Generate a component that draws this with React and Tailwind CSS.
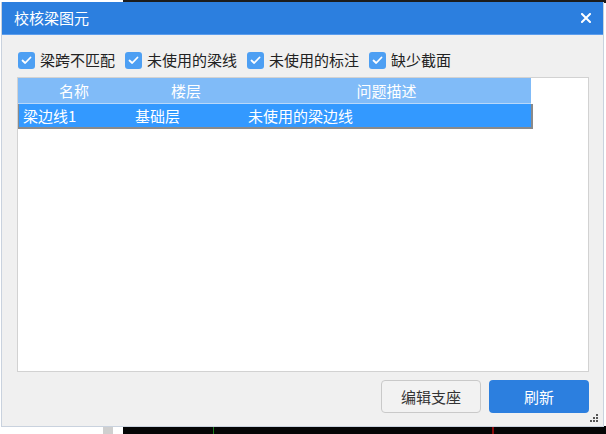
import React from "react";

const font = { fontFamily: '"Noto Sans CJK SC", "Noto Sans", sans-serif' };

function Check({ label }) {
  return (
    <div className="flex items-center gap-[5px]">
      <div className="w-[17px] h-[17px] rounded-[3px] bg-[#4d9ff3] flex items-center justify-center">
        <svg width="11" height="9" viewBox="0 0 11 9" fill="none">
          <path d="M1.5 4.5 L4.2 7 L9.5 1.5" stroke="white" strokeWidth="1.8" strokeLinecap="round" strokeLinejoin="round" />
        </svg>
      </div>
      <span className="text-[15px] leading-[18px] text-[#222]">{label}</span>
    </div>
  );
}

export default function App() {
  return (
    <div className="relative w-[606px] h-[434px] bg-white overflow-hidden" style={font}>
      {/* desktop content behind the window */}
      <div className="absolute left-[123px] top-0 w-[483px] h-[3px] bg-[#1c1c1c]" />
      <div className="absolute left-[123px] bottom-0 w-[483px] h-[8px] bg-[#050505]" />
      <div className="absolute left-[103px] bottom-0 w-[10px] h-[8px] bg-[#cfcfcf]" />
      <div className="absolute left-[213px] bottom-0 w-[1px] h-[8px] bg-[#1a7a1a]" />
      <div className="absolute left-[492px] bottom-0 w-[2px] h-[8px] bg-[#8a0a0a]" />

      <div className="absolute left-[1px] top-[2px] w-[603px] h-[425px] flex flex-col border border-[#c9d2de] border-t-0 bg-[#f0f0f0]">
        {/* title bar */}
        <div className="h-[33px] bg-[#2c7fdf] border-b border-[#5c9ded] flex items-center justify-between pl-[12px] pr-[12px] shrink-0">
          <span className="text-[15px] leading-[18px] text-white">校核梁图元</span>
          <svg width="10" height="10" viewBox="0 0 10 10">
            <path d="M1 1 L9 9 M9 1 L1 9" stroke="white" strokeWidth="2" strokeLinecap="square" />
          </svg>
        </div>

        {/* body */}
        <div className="flex flex-col flex-1 pl-[15px] pr-[14px] pt-[16px] pb-[14px]">
          <div className="flex items-center gap-[10px] pl-[1px] h-[18px]">
            <Check label="梁跨不匹配" />
            <Check label="未使用的梁线" />
            <Check label="未使用的标注" />
            <Check label="缺少截面" />
          </div>

          <div className="mt-[8px] h-[295px] border border-[#d2d2d2] bg-white">
            <div className="w-[513px] h-[26px] bg-[#80bbf8] border-b border-[#b8d8fa] flex text-white text-[15px] leading-[18px]">
              <div className="w-[112px] flex items-center justify-center">名称</div>
              <div className="w-[112px] flex items-center justify-center">楼层</div>
              <div className="flex-1 flex items-center justify-center">问题描述</div>
            </div>
            <div className="w-[515px] h-[25px] bg-[#3399ff] border-l border-r-2 border-b-2 border-[#8a8a8a] flex text-white text-[15px] leading-[18px]">
              <div className="w-[112px] flex items-center pl-[4px]">梁边线1</div>
              <div className="w-[112px] flex items-center pl-[4px]">基础层</div>
              <div className="flex-1 flex items-center pl-[5px]">未使用的梁边线</div>
            </div>
          </div>

          <div className="mt-[8px] flex justify-end gap-[8px]">
            <button className="w-[100px] h-[33px] rounded-[4px] border border-[#c9c9c9] bg-[#f2f2f2] text-[15px] leading-[18px] text-[#333]">
              编辑支座
            </button>
            <button className="w-[100px] h-[33px] rounded-[4px] bg-[#2c7fdf] text-[15px] leading-[18px] text-white">
              刷新
            </button>
          </div>
        </div>

        {/* resize grip */}
        <svg className="absolute right-[4px] bottom-[3px]" width="9" height="9" viewBox="0 0 9 9">
          <rect x="6" y="0" width="2" height="2" fill="#555" />
          <rect x="3" y="3" width="2" height="2" fill="#555" />
          <rect x="6" y="3" width="2" height="2" fill="#555" />
          <rect x="0" y="6" width="2" height="2" fill="#555" />
          <rect x="3" y="6" width="2" height="2" fill="#555" />
          <rect x="6" y="6" width="2" height="2" fill="#555" />
        </svg>
      </div>
    </div>
  );
}
